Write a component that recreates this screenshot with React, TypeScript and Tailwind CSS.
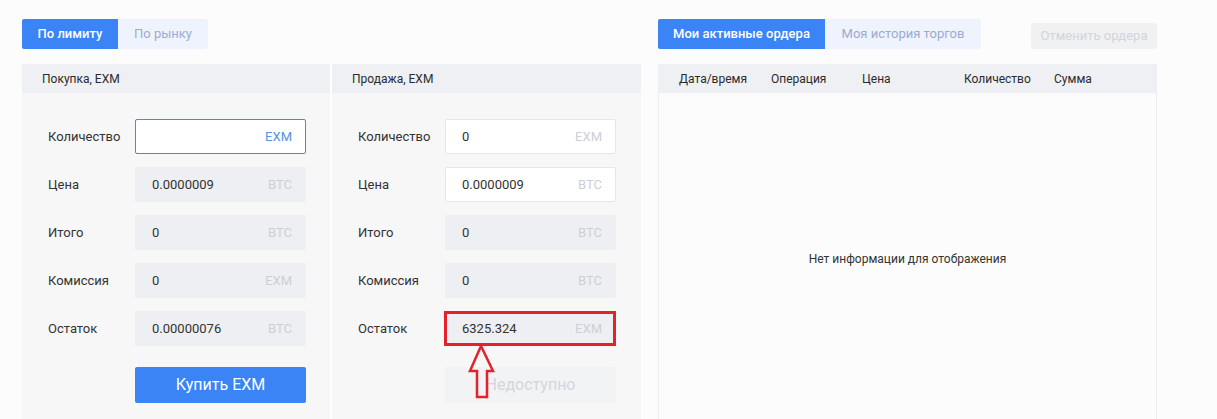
import React from "react";

type Field = {
  label: string;
  value: string;
  unit: string;
  kind: "focus" | "white" | "disabled";
};

const buyFields: Field[] = [
  { label: "Количество", value: "", unit: "EXM", kind: "focus" },
  { label: "Цена", value: "0.0000009", unit: "BTC", kind: "disabled" },
  { label: "Итого", value: "0", unit: "BTC", kind: "disabled" },
  { label: "Комиссия", value: "0", unit: "EXM", kind: "disabled" },
  { label: "Остаток", value: "0.00000076", unit: "BTC", kind: "disabled" },
];

const sellFields: Field[] = [
  { label: "Количество", value: "0", unit: "EXM", kind: "white" },
  { label: "Цена", value: "0.0000009", unit: "BTC", kind: "white" },
  { label: "Итого", value: "0", unit: "BTC", kind: "disabled" },
  { label: "Комиссия", value: "0", unit: "BTC", kind: "disabled" },
  { label: "Остаток", value: "6325.324", unit: "EXM", kind: "disabled" },
];

function Input({ field, highlight }: { field: Field; highlight?: boolean }) {
  const box =
    field.kind === "focus"
      ? "bg-white border border-[#4a88e5]"
      : field.kind === "white"
      ? "bg-white border border-[#e4e6ea]"
      : "bg-[#eeeff2] border border-[#eeeff2]";
  const unit = field.kind === "focus" ? "text-[#5b8fe3]" : "text-[#cbcfd6]";
  return (
    <div
      className={`relative flex h-[35px] w-[171px] items-center justify-between rounded-[2px] pl-[16px] pr-[13px] ${box}`}
    >
      <span className="text-[13px] text-[#333]">{field.value}</span>
      <span className={`text-[13px] ${unit}`}>{field.unit}</span>
      {highlight && (
        <div className="absolute -left-[2px] -top-[1px] h-[35px] w-[172px] border-[3px] border-[#e3222b]" />
      )}
    </div>
  );
}

function OrderColumn({
  title,
  fields,
  sell,
}: {
  title: string;
  fields: Field[];
  sell?: boolean;
}) {
  return (
    <div className={`flex flex-col ${sell ? "border-l-2 border-white" : ""}`}>
      <div className="flex h-[29px] items-center bg-[#eef0f3] pl-[20px] text-[12px] text-[#2b2b2b]">
        {title}
      </div>
      <div className="relative flex flex-col bg-[#f7f7f8] pt-[26px] pb-[30px] pl-[26px]">
        <div className="flex flex-col gap-[13px]">
          {fields.map((f, i) => (
            <div key={f.label} className="flex items-center">
              <div className="w-[87px] text-[13px] text-[#333]">{f.label}</div>
              <Input field={f} highlight={sell && i === fields.length - 1} />
            </div>
          ))}
        </div>
        <div className="mt-[21px] flex pl-[87px]">
          {sell ? (
            <div className="flex h-[36px] w-[171px] items-center justify-center rounded-[2px] bg-[#f2f3f5] text-[16px] text-[#d3d6dc]">
              Недоступно
            </div>
          ) : (
            <div className="flex h-[36px] w-[171px] items-center justify-center rounded-[2px] bg-[#3a84f6] text-[16px] text-white">
              Купить EXM
            </div>
          )}
        </div>
        {sell && (
          <svg
            className="absolute left-[136px] top-[251px]"
            width="28"
            height="56"
            viewBox="0 0 28 56"
          >
            <path
              d="M13 2 L2 27 L9 27 L9 53 L19 53 L19 27 L25 27 Z"
              fill="none"
              stroke="#e3222b"
              strokeWidth="2.5"
              strokeLinejoin="miter"
            />
          </svg>
        )}
      </div>
    </div>
  );
}

export default function App() {
  return (
    <div
      className="min-h-[419px] bg-[#fcfcfd] pl-[22px] pt-[19px]"
      style={{ fontFamily: "Roboto, 'Liberation Sans', sans-serif" }}
    >
      <div className="flex gap-[17px]">
        <div className="w-[619px]">
          <div className="flex h-[30px]">
            <div className="flex w-[96px] items-center justify-center rounded-l-[2px] bg-[#3a84f6] text-[13px] font-medium text-white">
              По лимиту
            </div>
            <div className="flex w-[90px] items-center justify-center rounded-r-[2px] bg-[#eef3fd] text-[13px] text-[#9dabd3]">
              По рынку
            </div>
          </div>
          <div className="mt-[15px] grid grid-cols-[308px_311px]">
            <OrderColumn title="Покупка, EXM" fields={buyFields} />
            <OrderColumn title="Продажа, EXM" fields={sellFields} sell />
          </div>
        </div>

        <div className="w-[499px]">
          <div className="flex items-start justify-between">
            <div className="flex h-[30px]">
              <div className="flex w-[167px] items-center justify-center rounded-l-[2px] bg-[#3a84f6] text-[13px] font-medium text-white">
                Мои активные ордера
              </div>
              <div className="flex w-[156px] items-center justify-center rounded-r-[2px] bg-[#eef3fd] text-[13px] text-[#9dabd3]">
                Моя история торгов
              </div>
            </div>
            <div className="mt-[4px] flex h-[26px] w-[126px] items-center justify-center rounded-[2px] bg-[#f0f1f3] text-[13px] text-[#d2d5da]">
              Отменить ордера
            </div>
          </div>
          <div className="mt-[15px]">
            <div className="flex h-[29px] items-center bg-[#eef0f3] text-[12px] text-[#2b2b2b]">
              <div className="w-[113px] pl-[21px]">Дата/время</div>
              <div className="w-[91px]">Операция</div>
              <div className="w-[102px]">Цена</div>
              <div className="w-[90px]">Количество</div>
              <div className="flex-1">Сумма</div>
            </div>
            <div className="h-[340px] border-x border-[#ededf0] bg-[#fcfcfd] pt-[157px] text-center text-[12px] text-[#333]">
              Нет информации для отображения
            </div>
          </div>
        </div>
      </div>
    </div>
  );
}
